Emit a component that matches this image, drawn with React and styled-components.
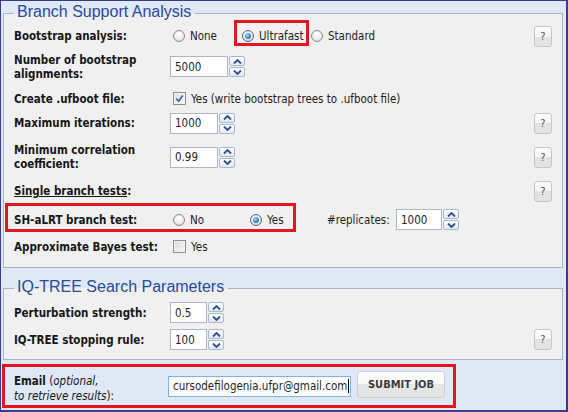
import React from "react";
import styled, { createGlobalStyle, css } from "styled-components";

const Global = createGlobalStyle`
  html, body { margin: 0; padding: 0; background: #ffffff; }
  body { font-family: "DejaVu Sans Condensed", "DejaVu Sans", sans-serif; }
`;

const RED = "#e3161e";

const Frame = styled.div`
  box-sizing: border-box;
  width: 568px;
  height: 412px;
  border-style: solid;
  border-color: #3b3b8d;
  border-width: 1px 2px 2px 1px;
  background: #dfe8f5;
  font-family: "DejaVu Sans Condensed", "DejaVu Sans", sans-serif;
  font-stretch: condensed;
  font-size: 11.5px;
  color: #1e1e1e;
  overflow: hidden;
`;

const Fieldset = styled.fieldset`
  box-sizing: border-box;
  width: 560px;
  min-width: 0;
  margin: ${(p) => p.$mt || 0}px 0 0 2px;
  padding: 0 10px ${(p) => p.$pb}px 10px;
  border: 1px solid #a9b1c5;
  background: #f0f0f0;
`;

const Legend = styled.legend`
  padding: 0 4px 3px 3px;
  font-family: "Liberation Sans", Arial, sans-serif;
  font-stretch: normal;
  font-size: 16px;
  line-height: 21px;
  color: #2a4a9c;
`;

const Row = styled.div`
  position: relative;
  display: flex;
  align-items: center;
  height: ${(p) => p.$h}px;
  ${(p) =>
    p.$mark &&
    css`
      &::after {
        content: "";
        position: absolute;
        box-sizing: border-box;
        border: 3px solid ${RED};
        left: -9px;
        top: calc(50% - 16.5px);
        width: 291px;
        height: 29px;
        pointer-events: none;
      }
    `}
`;

const Label = styled.div`
  width: 156px;
  flex-shrink: 0;
  font-weight: bold;
  line-height: 14px;
  white-space: nowrap;
  color: #161616;
`;

const Under = styled.span`
  text-decoration: underline;
`;

const Value = styled.div`
  flex: 1;
  min-width: 0;
  display: flex;
  align-items: center;
`;

const Choices = styled.div`
  display: flex;
  align-items: center;
  margin-left: 3px;
`;

const Option = styled.span`
  position: relative;
  display: inline-flex;
  align-items: center;
  gap: 5px;
  flex-shrink: 0;
  white-space: nowrap;
  width: ${(p) => (p.$w ? `${p.$w}px` : "auto")};
  line-height: 14px;
  ${(p) =>
    p.$mark &&
    css`
      &::after {
        content: "";
        position: absolute;
        box-sizing: border-box;
        border: 3px solid ${RED};
        left: -8px;
        top: calc(50% - 16px);
        width: 75px;
        height: 26px;
        pointer-events: none;
      }
    `}
`;

const Radio = styled.span`
  position: relative;
  box-sizing: border-box;
  width: 12px;
  height: 12px;
  border-radius: 50%;
  flex-shrink: 0;
  border: 1px solid #8c8c8c;
  background: radial-gradient(circle at 50% 35%, #ffffff 0%, #ececec 55%, #cdcdcd 100%);
  ${(p) =>
    p.$on &&
    css`
      border-color: #4d6785;
      &::after {
        content: "";
        position: absolute;
        left: 2px;
        top: 2px;
        width: 6px;
        height: 6px;
        border-radius: 50%;
        background: radial-gradient(circle at 40% 35%, #b0e6ff 0%, #3a9be0 45%, #0f4a8e 100%);
      }
    `}
`;

const Box = styled.span`
  box-sizing: border-box;
  width: 13px;
  height: 13px;
  flex-shrink: 0;
  border: 1px solid #8f8f8f;
  background: linear-gradient(135deg, #d9d9d9, #fbfbfb);
  box-shadow: inset 0 0 0 1px #f2f2f2;
  display: inline-flex;
  align-items: center;
  justify-content: center;
`;

const Spin = styled.div`
  display: inline-flex;
  gap: 1px;
  height: 21px;
  flex-shrink: 0;
`;

const SpinInput = styled.div`
  box-sizing: border-box;
  width: ${(p) => p.$w}px;
  height: 21px;
  border: 1px solid #abb6c9;
  background: #ffffff;
  padding: 0 4px;
  display: flex;
  align-items: center;
  color: #1e1e1e;
`;

const SpinBtns = styled.div`
  display: flex;
  flex-direction: column;
  gap: 1px;
  width: 16px;
`;

const SpinBtn = styled.span`
  flex: 1;
  box-sizing: border-box;
  border: 1px solid #a9b7cf;
  border-radius: 2px;
  background: linear-gradient(#ffffff, #e1e8f2);
  display: flex;
  align-items: center;
  justify-content: center;
`;

const Help = styled.span`
  box-sizing: border-box;
  width: 18px;
  height: 21px;
  flex-shrink: 0;
  border: 1px solid #c6c6c6;
  border-radius: 3px;
  background: linear-gradient(#fcfcfc 0%, #f5f5f5 50%, #e2e2e2 50%, #e4e4e4 100%);
  color: #555555;
  font-size: 11px;
  display: flex;
  align-items: center;
  justify-content: center;
`;

const ReplLabel = styled.span`
  width: 69px;
  flex-shrink: 0;
  white-space: nowrap;
`;

const EmailBox = styled.div`
  box-sizing: border-box;
  width: 454px;
  height: 44px;
  margin: 4px 0 0 1px;
  border: 3px solid ${RED};
  padding-left: 9px;
  display: flex;
  align-items: center;
`;

const EmailLabel = styled.div`
  width: 154px;
  flex-shrink: 0;
  line-height: 15px;
  margin-top: 5px;
  white-space: nowrap;
  color: #161616;
`;

const Bold = styled.b`
  font-weight: bold;
`;

const Em = styled.i`
  font-style: italic;
`;

const EmailField = styled.div`
  box-sizing: border-box;
  width: 183px;
  height: 21px;
  flex-shrink: 0;
  border: 1px solid #7fb2e6;
  background: #ffffff;
  padding-left: 4px;
  display: flex;
  align-items: center;
  white-space: nowrap;
  overflow: hidden;
`;

const Caret = styled.span`
  display: inline-block;
  width: 1px;
  height: 14px;
  background: #000000;
  margin-left: 1px;
`;

const Submit = styled.button`
  box-sizing: border-box;
  width: 88px;
  height: 27px;
  margin: 0 0 3px 6px;
  padding: 0;
  border: 1px solid #cfcfcf;
  border-radius: 3px;
  background: linear-gradient(#fefefe 0%, #f7f7f7 50%, #e6e6e6 50%, #e3e3e3 100%);
  font-family: inherit;
  font-stretch: condensed;
  font-weight: bold;
  font-size: 11px;
  color: #3c3c3c;
`;

const Chevron = ({ up }) => (
  <svg width="9" height="5" viewBox="0 0 9 5">
    <path
      d={up ? "M1 4.5 L4.5 1 L8 4.5" : "M1 0.5 L4.5 4 L8 0.5"}
      fill="none"
      stroke="#2d4f91"
      strokeWidth="1.8"
    />
  </svg>
);

const Spinner = ({ value, w }) => (
  <Spin>
    <SpinInput $w={w}>{value}</SpinInput>
    <SpinBtns>
      <SpinBtn>
        <Chevron up />
      </SpinBtn>
      <SpinBtn>
        <Chevron />
      </SpinBtn>
    </SpinBtns>
  </Spin>
);

const Check = ({ on }) => (
  <Box>
    {on && (
      <svg width="9" height="9" viewBox="0 0 9 9">
        <path d="M1.2 4.6 L3.6 7.2 L7.8 1.4" fill="none" stroke="#4560a8" strokeWidth="1.7" />
      </svg>
    )}
  </Box>
);

export default function App() {
  return (
    <>
      <Global />
      <Frame>
        <Fieldset $pb={10}>
          <Legend>Branch Support Analysis</Legend>
          <Row $h={22}>
            <Label>Bootstrap analysis:</Label>
            <Value>
              <Choices>
                <Option $w={69}>
                  <Radio />
                  None
                </Option>
                <Option $w={69} $mark>
                  <Radio $on />
                  Ultrafast
                </Option>
                <Option>
                  <Radio />
                  Standard
                </Option>
              </Choices>
            </Value>
            <Help>?</Help>
          </Row>
          <Row $h={39}>
            <Label>
              Number of bootstrap
              <br />
              alignments:
            </Label>
            <Value>
              <Spinner value="5000" w={58} />
            </Value>
          </Row>
          <Row $h={25}>
            <Label>Create .ufboot file:</Label>
            <Value>
              <Choices>
                <Option>
                  <Check on />
                  Yes (write bootstrap trees to .ufboot file)
                </Option>
              </Choices>
            </Value>
          </Row>
          <Row $h={24}>
            <Label>Maximum iterations:</Label>
            <Value>
              <Spinner value="1000" w={48} />
            </Value>
            <Help>?</Help>
          </Row>
          <Row $h={44}>
            <Label>
              Minimum correlation
              <br />
              coefficient:
            </Label>
            <Value>
              <Spinner value="0.99" w={48} />
            </Value>
            <Help>?</Help>
          </Row>
          <Row $h={24}>
            <Label>
              <Under>Single branch tests</Under>:
            </Label>
            <Value />
            <Help>?</Help>
          </Row>
          <Row $h={33} $mark>
            <Label>SH-aLRT branch test:</Label>
            <Value>
              <Choices>
                <Option $w={77}>
                  <Radio />
                  No
                </Option>
                <Option $w={77}>
                  <Radio $on />
                  Yes
                </Option>
                <ReplLabel>#replicates:</ReplLabel>
                <Spinner value="1000" w={46} />
              </Choices>
            </Value>
          </Row>
          <Row $h={21}>
            <Label>Approximate Bayes test:</Label>
            <Value>
              <Choices>
                <Option>
                  <Check />
                  Yes
                </Option>
              </Choices>
            </Value>
          </Row>
        </Fieldset>

        <Fieldset $mt={8} $pb={5}>
          <Legend>IQ-TREE Search Parameters</Legend>
          <Row $h={25}>
            <Label>Perturbation strength:</Label>
            <Value>
              <Spinner value="0.5" w={37} />
            </Value>
          </Row>
          <Row $h={29}>
            <Label>IQ-TREE stopping rule:</Label>
            <Value>
              <Spinner value="100" w={37} />
            </Value>
            <Help>?</Help>
          </Row>
        </Fieldset>

        <EmailBox>
          <EmailLabel>
            <Bold>Email</Bold> (<Em>optional,</Em>
            <br />
            <Em>to retrieve results</Em>):
          </EmailLabel>
          <EmailField>
            cursodefilogenia.ufpr@gmail.com
            <Caret />
          </EmailField>
          <Submit>SUBMIT JOB</Submit>
        </EmailBox>
      </Frame>
    </>
  );
}
